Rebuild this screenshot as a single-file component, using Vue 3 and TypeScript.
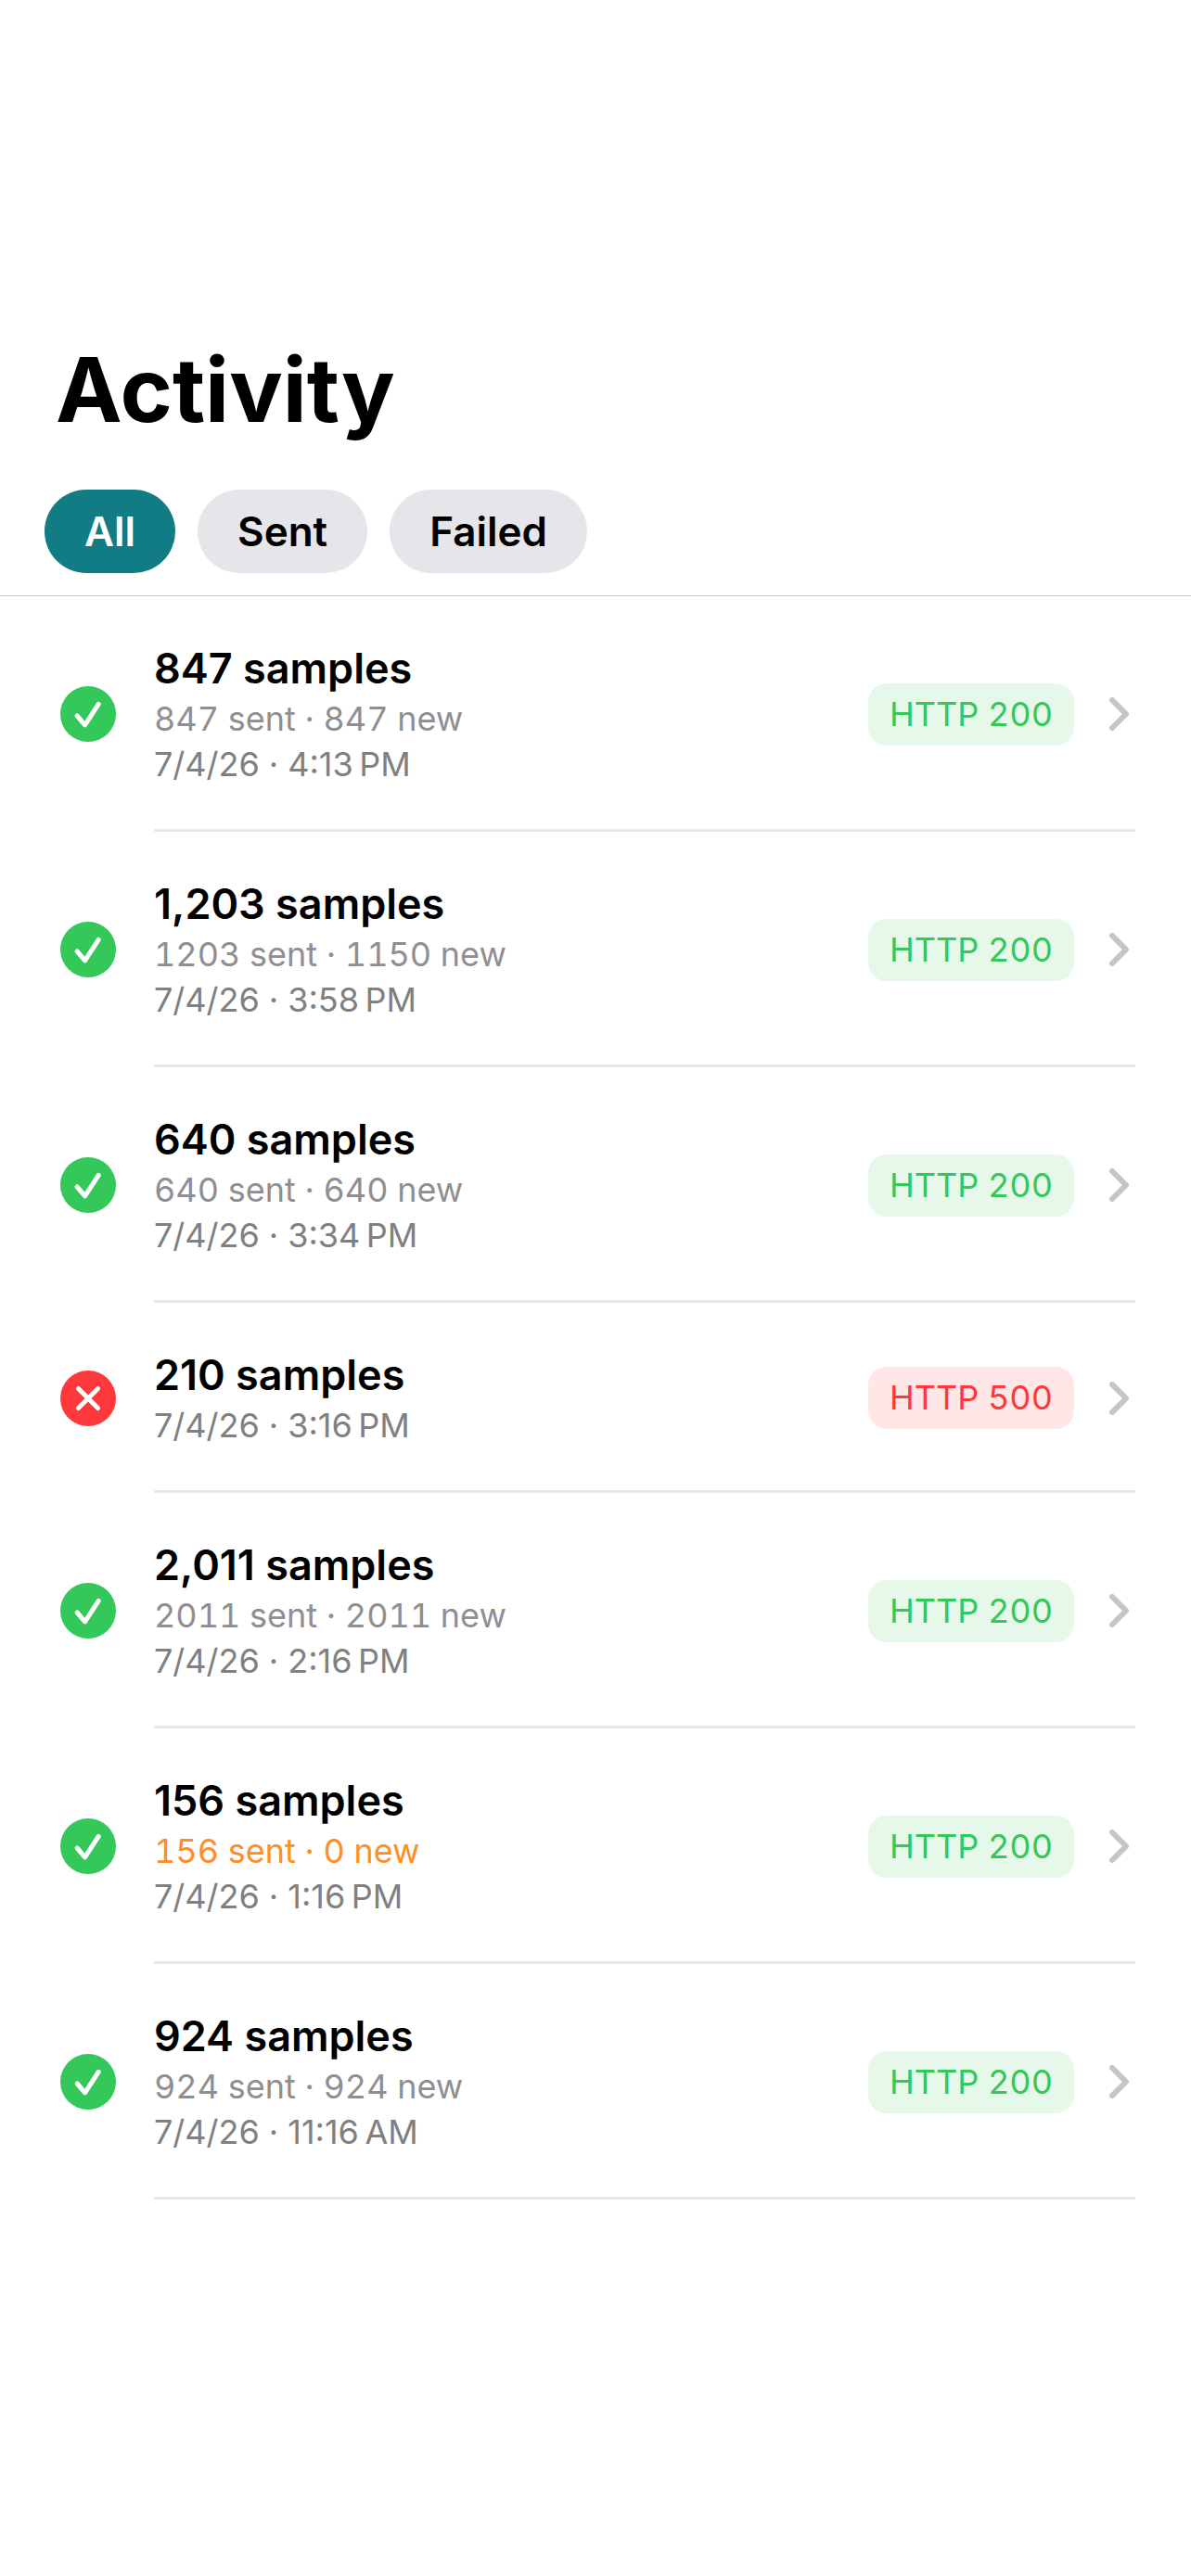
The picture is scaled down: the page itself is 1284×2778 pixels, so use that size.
<script setup lang="ts">
import { computed, ref } from 'vue'

type Filter = 'All' | 'Sent' | 'Failed'

interface Upload {
  id: number
  title: string
  detail?: string
  stale?: boolean
  date: string
  time: string
  status: number
}

const filters: Filter[] = ['All', 'Sent', 'Failed']
const active = ref<Filter>('All')

const uploads: Upload[] = [
  { id: 1, title: '847 samples', detail: '847 sent · 847 new', date: '7/4/26', time: '4:13\u202fPM', status: 200 },
  { id: 2, title: '1,203 samples', detail: '1203 sent · 1150 new', date: '7/4/26', time: '3:58\u202fPM', status: 200 },
  { id: 3, title: '640 samples', detail: '640 sent · 640 new', date: '7/4/26', time: '3:34\u202fPM', status: 200 },
  { id: 4, title: '210 samples', date: '7/4/26', time: '3:16\u202fPM', status: 500 },
  { id: 5, title: '2,011 samples', detail: '2011 sent · 2011 new', date: '7/4/26', time: '2:16\u202fPM', status: 200 },
  { id: 6, title: '156 samples', detail: '156 sent · 0 new', stale: true, date: '7/4/26', time: '1:16\u202fPM', status: 200 },
  { id: 7, title: '924 samples', detail: '924 sent · 924 new', date: '7/4/26', time: '11:16\u202fAM', status: 200 },
]

const isOk = (u: Upload): boolean => u.status < 400

const visible = computed(() =>
  uploads.filter((u) => active.value === 'All' || isOk(u) === (active.value === 'Sent')),
)
</script>

<template>
  <main class="screen">
    <header class="header">
      <h1 class="heading">Activity</h1>
      <div class="filters" role="group" aria-label="Filter activity">
        <button
          v-for="f in filters"
          :key="f"
          type="button"
          class="chip"
          :class="{ 'chip-active': f === active }"
          :aria-pressed="f === active"
          @click="active = f"
        >
          {{ f }}
        </button>
      </div>
    </header>

    <ul class="list">
      <li v-for="u in visible" :key="u.id">
        <a class="row" :href="`#upload-${u.id}`">
          <svg class="status" viewBox="0 0 60 60" aria-hidden="true">
            <circle cx="30" cy="30" r="30" :fill="isOk(u) ? '#34c759' : '#ff383c'" />
            <path v-if="isOk(u)" class="mark" d="M18.2 32 26.6 41.8 41.2 19.4" />
            <path v-else class="mark" d="M19.5 19.5 40.5 40.5M40.5 19.5 19.5 40.5" />
          </svg>
          <div class="body">
            <div class="text">
              <span class="title">{{ u.title }}</span>
              <span v-if="u.detail" class="detail" :class="{ stale: u.stale }">{{ u.detail }}</span>
              <span class="when"><span>{{ u.date }}</span><span>·</span><span>{{ u.time }}</span></span>
            </div>
            <span class="badge" :class="isOk(u) ? 'badge-ok' : 'badge-error'">HTTP {{ u.status }}</span>
            <svg class="chevron" viewBox="0 0 28 36" aria-hidden="true">
              <path d="M3 3 18 18 3 33" />
            </svg>
          </div>
        </a>
      </li>
    </ul>
  </main>
</template>

<style>
body {
  background: #fff;
}
</style>

<style scoped>
.screen {
  font-family: Inter, 'Liberation Sans', sans-serif;
  color: #000;
}

.header {
  padding: 360px 48px 24px;
  border-bottom: 1px solid #c6c6c8;
}

.heading {
  margin: 0 0 48px 12px;
  font-size: 96px;
  line-height: 120px;
  font-weight: 700;
}

.filters {
  display: flex;
  gap: 24px;
}

.chip {
  height: 90px;
  padding: 0 43px;
  border: 0;
  border-radius: 45px;
  background: #e5e5ea;
  color: #000;
  font-family: inherit;
  font-size: 44px;
  font-weight: 600;
  cursor: pointer;
}

.chip-active {
  background: #117c84;
  color: #fff;
}

.list {
  margin: 0;
  padding: 0;
  list-style: none;
}

.row {
  display: flex;
  align-items: center;
  gap: 41px;
  padding: 0 60px 0 65px;
  color: inherit;
  text-decoration: none;
}

.status {
  flex: none;
  width: 60px;
  height: 60px;
}

.mark {
  fill: none;
  stroke: #fff;
  stroke-width: 5;
  stroke-linecap: round;
  stroke-linejoin: round;
}

.body {
  flex: 1;
  display: flex;
  align-items: center;
  padding: 48px 0 45px;
  border-bottom: 3px solid #e8e8e8;
}

.text {
  flex: 1;
  display: flex;
  flex-direction: column;
}

.title {
  font-size: 45px;
  line-height: 60px;
  font-weight: 600;
}

.detail,
.when {
  font-size: 36px;
  line-height: 49px;
}

.detail {
  color: #8e8e93;
  font-variant-numeric: tabular-nums;
}

.stale {
  color: #ff8d28;
}

.when {
  display: flex;
  gap: 10px;
  color: #808080;
}

.badge {
  padding: 9px 23px;
  border-radius: 20px;
  font-size: 36px;
  line-height: 49px;
  font-variant-numeric: tabular-nums;
}

.badge-ok {
  background: #e6f8ea;
  color: #34c759;
}

.badge-error {
  background: #ffe6e7;
  color: #ff383c;
}

.chevron {
  width: 28px;
  height: 36px;
  margin-left: 38px;
  fill: none;
  stroke: #c5c5c7;
  stroke-width: 6;
  stroke-linecap: round;
  stroke-linejoin: round;
}
</style>
